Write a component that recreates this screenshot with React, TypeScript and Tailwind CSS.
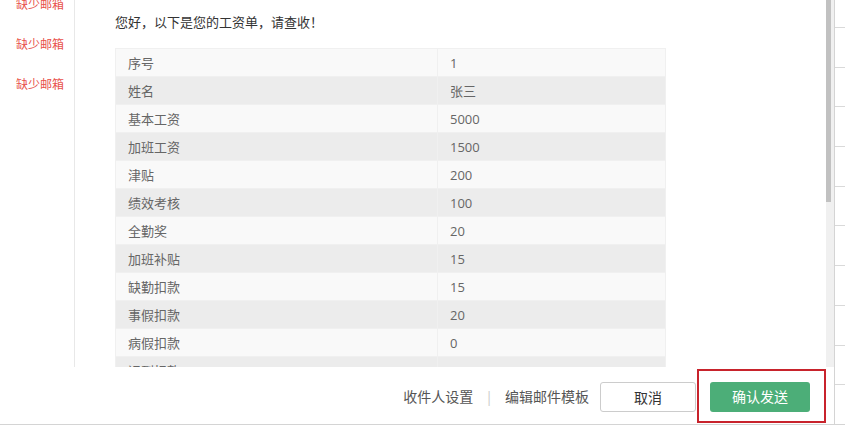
export default function App() {
  const rows = [
    { label: '序号', value: '1' },
    { label: '姓名', value: '张三' },
    { label: '基本工资', value: '5000' },
    { label: '加班工资', value: '1500' },
    { label: '津贴', value: '200' },
    { label: '绩效考核', value: '100' },
    { label: '全勤奖', value: '20' },
    { label: '加班补贴', value: '15' },
    { label: '缺勤扣款', value: '15' },
    { label: '事假扣款', value: '20' },
    { label: '病假扣款', value: '0' },
    { label: '迟到扣款', value: '5' },
  ]

  const missing = ['缺少邮箱', '缺少邮箱', '缺少邮箱']
  const gridLines = Array.from({ length: 10 }, (_, i) => i)

  return (
    <div
      className="w-[845px] h-[426px] bg-white overflow-hidden flex flex-col"
      style={{ fontFamily: '"Open Sans", "Noto Sans CJK SC", sans-serif' }}
    >
      <div className="flex h-[424px]">
        {/* modal */}
        <div className="w-[835px] flex flex-col border-r border-[#d4d4d4]">
          <div className="flex h-[367px]">
            <div className="w-[75px] border-r border-[#e8e8e8] pl-[16px] flex flex-col">
              <div className="-mt-[15px]">
                {missing.map((m, i) => (
                  <div key={i} className="h-[40px] leading-[40px] text-[12px] text-[#e8504a]">
                    {m}
                  </div>
                ))}
              </div>
            </div>

            <div className="flex-1 overflow-hidden pl-[40px]">
              <p className="pt-[13px] leading-[18px] text-[13px] text-[#333]">
                您好，以下是您的工资单，请查收！
              </p>
              <table className="mt-[17px] w-[551px] border-collapse text-[13px] text-[#666]">
                <tbody>
                  {rows.map((r, i) => (
                    <tr key={i} className={i % 2 === 0 ? 'bg-[#f9f9f9]' : 'bg-[#ececec]'}>
                      <td className="w-[322px] h-[28px] px-[12px] border border-[#f0f0f0] leading-[18px]">
                        {r.label}
                      </td>
                      <td className="h-[28px] px-[12px] border border-[#f0f0f0] leading-[18px]">
                        {r.value}
                      </td>
                    </tr>
                  ))}
                </tbody>
              </table>
            </div>

            {/* scrollbar */}
            <div className="w-[8px] bg-[#f0f0f0]">
              <div className="w-[5px] h-[202px] bg-[#c1c1c1]" />
            </div>
          </div>

          {/* footer */}
          <div className="h-[57px] flex items-center justify-end pr-[8px]">
            <div className="mt-[3px] flex items-center text-[14px] text-[#555] leading-[20px]">
              <span>收件人设置</span>
              <span className="mx-[12px] text-[#ccc]">|</span>
              <span>编辑邮件模板</span>
            </div>
            <button className="mt-[3px] ml-[11px] w-[96px] h-[30px] border border-[#cccccc] rounded-[3px] bg-white text-[14px] text-[#333]">
              取消
            </button>
            <div className="ml-[1px] w-[129px] h-[54px] border-2 border-[#c8232c] flex items-center pl-[11px]">
              <button className="mt-[2px] w-[100px] h-[30px] rounded-[3px] bg-[#4cae78] text-white text-[14px]">
                确认发送
              </button>
            </div>
          </div>
        </div>

        {/* background grid strip */}
        <div className="flex-1 flex flex-col">
          <div className="h-[27px]" />
          {gridLines.map((g) => (
            <div key={g} className="h-[40px] border-t border-[#d9d9d9]" />
          ))}
        </div>
      </div>
      <div className="h-[2px] border-t border-[#d4d4d4]" />
    </div>
  )
}
